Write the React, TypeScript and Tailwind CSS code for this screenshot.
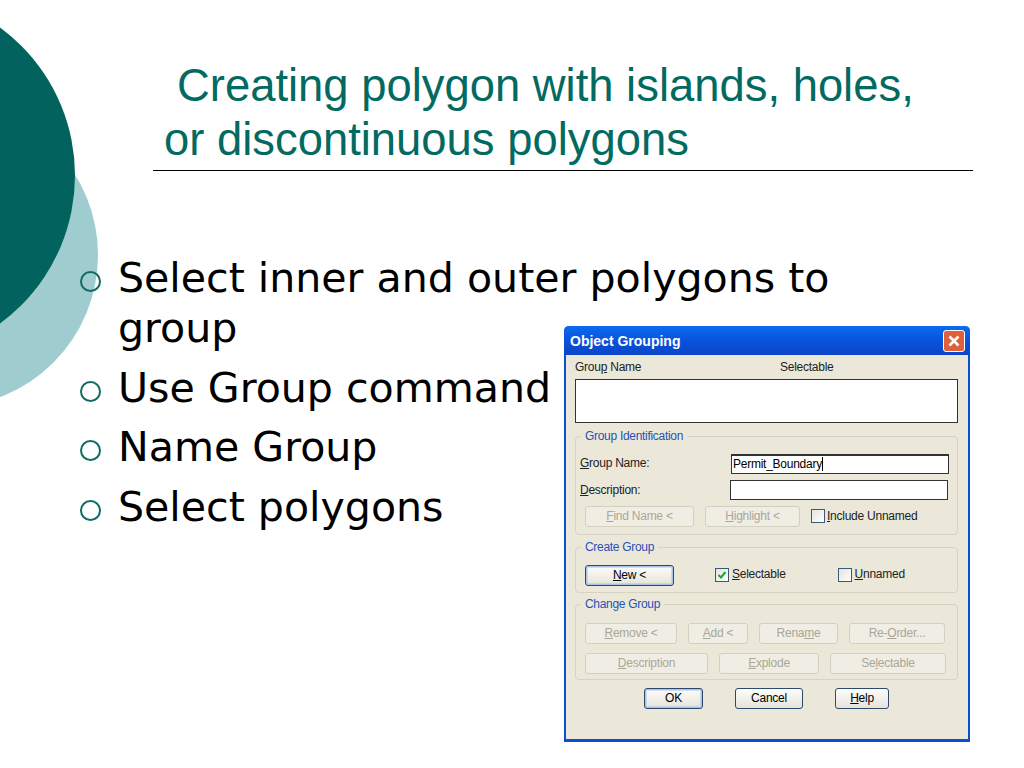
import React from "react";

const Btn = ({ w, children, disabled, ok, cls = "" }: { w: string; children: React.ReactNode; disabled?: boolean; ok?: boolean; cls?: string }) => (
  <div
    className={`${w} h-[21px] shrink-0 flex items-center justify-center rounded-[3px] border text-[12px] leading-none ${
      disabled
        ? "border-[#d3d0c0] bg-[#f0eee4] text-[#a9a798]"
        : ok
        ? "border-[#2d4a6e] bg-gradient-to-b from-[#fdfdfb] to-[#e6e3d8] text-black shadow-[inset_0_0_0_1.5px_#a9c3e8]"
        : "border-[#2d4a6e] bg-gradient-to-b from-[#fdfdfb] to-[#e6e3d8] text-black"
    } ${cls}`}
  >
    <span className="-mt-[2px]">{children}</span>
  </div>
);

const Check = ({ checked }: { checked?: boolean }) => (
  <div className="w-[14px] h-[14px] shrink-0 border border-[#3a5a78] bg-gradient-to-br from-[#e4e3dc] to-white flex items-center justify-center">
    {checked && (
      <svg width="10" height="10" viewBox="0 0 10 10">
        <path d="M1.5 5 L4 7.5 L8.5 2" fill="none" stroke="#22a33a" strokeWidth="2" />
      </svg>
    )}
  </div>
);

const Group = ({ title, h, mt, children, cls = "" }: { title: string; h: string; mt: string; children: React.ReactNode; cls?: string }) => (
  <div className={`relative w-[383px] ${h} ${mt} rounded-[4px] border border-[#d6d3c2] ${cls}`}>
    <div className="absolute left-[5px] top-[-8px] bg-[#ebe8d9] px-[4px] text-[12px] leading-[14px] text-[#2a50b8] tracking-[-0.3px]">{title}</div>
    {children}
  </div>
);

export default function App() {
  return (
    <div className="relative w-[1024px] h-[768px] overflow-hidden bg-white [font-family:'Liberation_Sans',sans-serif]">
      <div className="absolute left-[-206px] top-[103px] w-[304px] h-[304px] rounded-full bg-[#9fcdcf]" />
      <div className="absolute left-[-292px] top-[-8px] w-[367px] h-[367px] rounded-full bg-[#02625e]" />

      <div className="relative pt-[59px] pl-[153px] w-[973px]">
        <div className="pl-[11px] text-[45.4px] leading-[54px] text-[#036a62] whitespace-nowrap">
          <div className="pl-[13px]">Creating polygon with islands, holes,</div>
          <div>or discontinuous polygons</div>
        </div>
        <div className="mt-[3px] h-px bg-black" />
      </div>

      <ul className="relative mt-[82px] pl-[80px] w-[800px] [font-family:'DejaVu_Sans',sans-serif] text-[41.1px] leading-[50px] text-black flex flex-col gap-[9.5px]">
        {[["Select inner and outer polygons to", "group"], ["Use Group command"], ["Name Group"], ["Select polygons"]].map((lines) => (
          <li key={lines[0]} className="flex">
            <div className="w-[21px] h-[21px] mt-[18px] mr-[17px] shrink-0 rounded-full border-[2.5px] border-[#0f6b64]" />
            <div className="whitespace-nowrap">
              {lines.map((l) => (
                <div key={l}>{l}</div>
              ))}
            </div>
          </li>
        ))}
      </ul>

      <div className="absolute left-[564px] top-[326px] w-[406px] h-[416px] flex flex-col rounded-t-[5px] border-x-[2px] border-b-[3px] border-[#0a4fd0] bg-[#ebe8d9] text-[12px] [font-family:'Liberation_Sans',sans-serif] text-[#222] tracking-[-0.25px]">
        <div className="h-[29px] -mx-[2px] shrink-0 flex items-center justify-between pl-[6px] pr-[5px] rounded-t-[5px] bg-gradient-to-b from-[#0a6cf0] via-[#0a52dc] to-[#0a45c8]">
          <span className="font-bold text-[14px] text-white tracking-[0px] pt-[2px]">Object Grouping</span>
          <div className="w-[22px] h-[22px] rounded-[3px] border border-white bg-[#e0603a] flex items-center justify-center">
            <svg width="14" height="14" viewBox="0 0 14 14">
              <path d="M2.5 2.5 L11.5 11.5 M11.5 2.5 L2.5 11.5" stroke="white" strokeWidth="2.6" />
            </svg>
          </div>
        </div>

        <div className="pl-[9px] flex flex-col">
          <div className="h-[24px] flex items-center">
            <span className="w-[205px] -mt-[1px]">Grou<u>p</u> Name</span>
            <span className="-mt-[1px]">Selectable</span>
          </div>
          <div className="w-[383px] h-[44px] bg-white border border-[#333]" />

          <Group title="Group Identification" h="h-[99px]" mt="mt-[13px]" cls="pl-[4px]">
            <div className="flex items-center mt-[17px] h-[20px]">
              <span className="w-[151px] -mt-[3px]"><u>G</u>roup Name:</span>
              <div className="w-[218px] h-[20px] bg-white border border-[#333] border-t-[2px] pl-[1px] leading-[16px] text-black">Permit_Boundary<span className="border-l border-black" /></div>
            </div>
            <div className="flex items-center mt-[6px] h-[20px]">
              <span className="w-[150px] -mt-[1px]"><u>D</u>escription:</span>
              <div className="w-[218px] h-[20px] bg-white border border-[#333]" />
            </div>
            <div className="flex items-center mt-[6px] pl-[5px]">
              <Btn w="w-[109px]" disabled><u>F</u>ind Name &lt;</Btn>
              <Btn w="w-[95px]" disabled cls="ml-[11px]"><u>H</u>ighlight &lt;</Btn>
              <div className="ml-[11px] -mt-[2px]"><Check /></div>
              <span className="ml-[2px] -mt-[2px]"><u>I</u>nclude Unnamed</span>
            </div>
          </Group>

          <Group title="Create Group" h="h-[46px]" mt="mt-[12px]" cls="pl-[9px] pt-[17px]">
            <div className="flex items-center">
              <Btn w="w-[89px]" ok><u>N</u>ew &lt;</Btn>
              <div className="ml-[41px] -mt-[2px]"><Check checked /></div>
              <span className="ml-[3px] -mt-[3px]"><u>S</u>electable</span>
              <div className="ml-[52px] -mt-[2px]"><Check /></div>
              <span className="ml-[3px] -mt-[3px]"><u>U</u>nnamed</span>
            </div>
          </Group>

          <Group title="Change Group" h="h-[76px]" mt="mt-[11px]" cls="pl-[9px] pt-[18px]">
            <div className="flex gap-[11px]">
              <Btn w="w-[92px]" disabled><u>R</u>emove &lt;</Btn>
              <Btn w="w-[60px]" disabled><u>A</u>dd &lt;</Btn>
              <Btn w="w-[79px]" disabled>Rena<u>m</u>e</Btn>
              <Btn w="w-[96px]" disabled>Re-<u>O</u>rder...</Btn>
            </div>
            <div className="flex gap-[11px] mt-[9px]">
              <Btn w="w-[123px]" disabled><u>D</u>escription</Btn>
              <Btn w="w-[100px]" disabled><u>E</u>xplode</Btn>
              <Btn w="w-[116px]" disabled>Se<u>l</u>ectable</Btn>
            </div>
          </Group>

          <div className="flex mt-[8px] pl-[69px]">
            <Btn w="w-[59px]" ok>OK</Btn>
            <Btn w="w-[68px]" cls="ml-[32px]">Cancel</Btn>
            <Btn w="w-[54px]" cls="ml-[32px]"><u>H</u>elp</Btn>
          </div>
        </div>
      </div>
    </div>
  );
}
